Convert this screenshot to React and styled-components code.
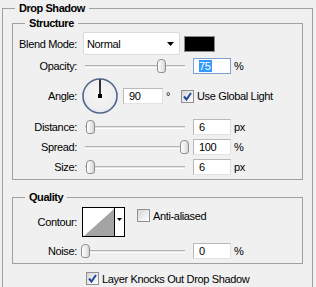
import React from "react";
import styled, { createGlobalStyle } from "styled-components";

const GlobalStyle = createGlobalStyle`
  html, body {
    margin: 0;
    padding: 0;
    background: #f0f0f0;
  }
  body {
    font-family: "Liberation Sans", Arial, sans-serif;
    font-size: 11px;
    color: #000;
    letter-spacing: -0.35px;
  }
`;

const Page = styled.div`
  width: 316px;
  height: 287px;
  overflow: hidden;
  box-sizing: border-box;
  padding: 8px 3px 0 2px;
`;

const Outer = styled.div`
  position: relative;
  height: 279px;
  box-sizing: border-box;
  border: 1px solid #a0a0a0;
  border-bottom: none;
  padding: 14px 9px 0 9px;
`;

const Title = styled.span`
  position: absolute;
  top: -7px;
  left: 12px;
  padding: 0 4px;
  line-height: 13px;
  font-weight: bold;
  letter-spacing: -0.45px;
  background: #f0f0f0;
`;

const Group = styled.div`
  position: relative;
  border: 1px solid #a0a0a0;
  margin-top: ${(p) => p.$top || 0}px;
  padding-bottom: 4px;
`;

const Row = styled.div`
  display: flex;
  align-items: center;
  height: ${(p) => p.$h || 16}px;
  margin-top: ${(p) => p.$top || 0}px;
`;

const Label = styled.span`
  flex: none;
  width: 64px;
  text-align: right;
  white-space: nowrap;
`;

const Select = styled.div`
  flex: none;
  display: flex;
  align-items: center;
  justify-content: space-between;
  width: 97px;
  height: 23px;
  box-sizing: border-box;
  margin-left: 6px;
  padding: 1px 5px 0 3px;
  background: #fff;
  border: 1px solid #dadada;
  border-radius: 2px;
`;

const Swatch = styled.div`
  flex: none;
  width: 31px;
  height: 16px;
  box-sizing: border-box;
  margin-left: 4px;
  background: #000;
  border: 1px solid #8a8a8a;
`;

const Track = styled.div`
  position: relative;
  flex: none;
  width: ${(p) => p.$w}px;
  height: 14px;
  margin-left: ${(p) => p.$ml}px;

  &::before {
    content: "";
    position: absolute;
    left: 0;
    right: 4px;
    top: 6px;
    height: 1px;
    background: #e4e4e4;
    border-top: 1px solid #b4b4b4;
    border-bottom: 1px solid #fff;
  }
`;

const Thumb = styled.div`
  position: absolute;
  top: 0;
  width: 9px;
  height: 14px;
  box-sizing: border-box;
  border: 1px solid #8e8e8e;
  border-radius: 4px 4px 3px 3px;
  background: linear-gradient(90deg, #fdfdfd, #e6e6e6 70%, #d2d2d2);
`;

const Field = styled.div`
  flex: none;
  width: ${(p) => p.$w || 38}px;
  height: 16px;
  box-sizing: border-box;
  margin-left: ${(p) => p.$ml ?? 4}px;
  padding: 1px 0 0 5px;
  line-height: 13px;
  background: #fff;
  border: 1px solid;
  border-color: ${(p) =>
    p.$focus ? "#7da2ce" : "#b9b9b9 #e2e2e2 #e2e2e2 #b9b9b9"};
`;

const Selected = styled.span`
  background: #3399ff;
  color: #fff;
  padding: 0 1px 0 0;
`;

const Unit = styled.span`
  flex: none;
  margin-left: 3px;
  width: ${(p) => p.$w || "auto"};
`;

const Check = styled.label`
  display: flex;
  align-items: center;
  gap: 3px;
  margin-left: ${(p) => p.$ml || 0}px;
  align-self: ${(p) => p.$self || "center"};
  margin-top: ${(p) => p.$mt || 0}px;
  white-space: nowrap;
`;

const Box = styled.span`
  flex: none;
  display: flex;
  align-items: center;
  justify-content: center;
  width: 13px;
  height: 13px;
  box-sizing: border-box;
  border: 1px solid #8f8f8f;
  background: linear-gradient(135deg, #d4d4d4, #f4f4f4 70%, #fff);
`;

const Dial = styled.svg`
  flex: none;
  margin-left: 5px;
`;

const Contour = styled.div`
  flex: none;
  display: flex;
  width: 43px;
  height: 30px;
  box-sizing: border-box;
  margin-left: 5px;
  background: #fff;
  border: 1px solid #000;
`;

const ContourArrow = styled.div`
  flex: 1;
  display: flex;
  align-items: flex-start;
  justify-content: center;
  padding-top: 10px;
  border-left: 1px solid #000;
`;

const Footer = styled.div`
  margin-top: 8px;
  padding-left: 74px;
  display: flex;
`;

const Arrow = () => (
  <svg width="7" height="4" viewBox="0 0 7 4">
    <polygon points="0,0 7,0 3.5,4" fill="#000" />
  </svg>
);

const CheckBox = ({ checked }) => (
  <Box>
    {checked && (
      <svg width="9" height="9" viewBox="0 0 9 9">
        <path d="M1 4.5 L3.5 7.5 L8 1" fill="none" stroke="#24479c" strokeWidth="2" />
      </svg>
    )}
  </Box>
);

const Slider = ({ value, w = 104, ml = 8, start = 1 }) => (
  <Track $w={w} $ml={ml}>
    <Thumb style={{ left: start + (value / 100) * (w - 9 - start) }} />
  </Track>
);

const SliderRow = ({ label, value, field, unit, top, ml, w, start }) => (
  <Row $top={top}>
    <Label>{label}</Label>
    <Slider value={value} ml={ml} w={w} start={start} />
    <Field>{field}</Field>
    <Unit>{unit}</Unit>
  </Row>
);

export default function App() {
  return (
    <Page>
      <GlobalStyle />
      <Outer>
        <Title>Drop Shadow</Title>
        <Group>
          <Title>Structure</Title>
          <Row $h={23} $top={8}>
            <Label>Blend Mode:</Label>
            <Select>
              <span>Normal</span>
              <Arrow />
            </Select>
            <Swatch />
          </Row>
          <Row $top={3}>
            <Label>Opacity:</Label>
            <Slider value={75} />
            <Field $focus>
              <Selected>75</Selected>
            </Field>
            <Unit>%</Unit>
          </Row>
          <Row $h={36} $top={4}>
            <Label>Angle:</Label>
            <Dial width="36" height="36" viewBox="0 0 36 36">
              <defs>
                <radialGradient id="dialFill" cx="50%" cy="45%" r="55%">
                  <stop offset="0%" stopColor="#f6f6f6" />
                  <stop offset="80%" stopColor="#efefef" />
                  <stop offset="100%" stopColor="#dfe3ea" />
                </radialGradient>
              </defs>
              <circle cx="18" cy="18" r="17" fill="url(#dialFill)" stroke="#50658f" strokeWidth="1.6" />
              <line x1="18" y1="1.5" x2="18" y2="18" stroke="#000" strokeWidth="1.6" />
              <rect x="16" y="16" width="4" height="4" fill="#000" />
            </Dial>
            <Field $w={40} $ml={5}>90</Field>
            <Unit $w="15px">°</Unit>
            <Check>
              <CheckBox checked />
              Use Global Light
            </Check>
          </Row>
          <SliderRow label="Distance:" value={0} field="6" unit="px" top={5} />
          <SliderRow label="Spread:" value={100} field="100" unit="%" top={4} />
          <SliderRow label="Size:" value={0} field="6" unit="px" top={4} />
        </Group>

        <Group $top={17}>
          <Title>Quality</Title>
          <Row $h={30} $top={9}>
            <Label>Contour:</Label>
            <Contour>
              <svg width="31" height="28" viewBox="0 0 31 28">
                <polygon points="1,28 31,1 31,28" fill="#a4a4a4" />
              </svg>
              <ContourArrow>
                <svg width="5" height="3" viewBox="0 0 5 3">
                  <polygon points="0,0 5,0 2.5,3" fill="#000" />
                </svg>
              </ContourArrow>
            </Contour>
            <Check $ml={12} $self="flex-start" $mt={2}>
              <CheckBox />
              Anti-aliased
            </Check>
          </Row>
          <SliderRow label="Noise:" value={0} field="0" unit="%" top={6} ml={4} w={108} start={0} />
        </Group>

        <Footer>
          <Check>
            <CheckBox checked />
            Layer Knocks Out Drop Shadow
          </Check>
        </Footer>
      </Outer>
    </Page>
  );
}
